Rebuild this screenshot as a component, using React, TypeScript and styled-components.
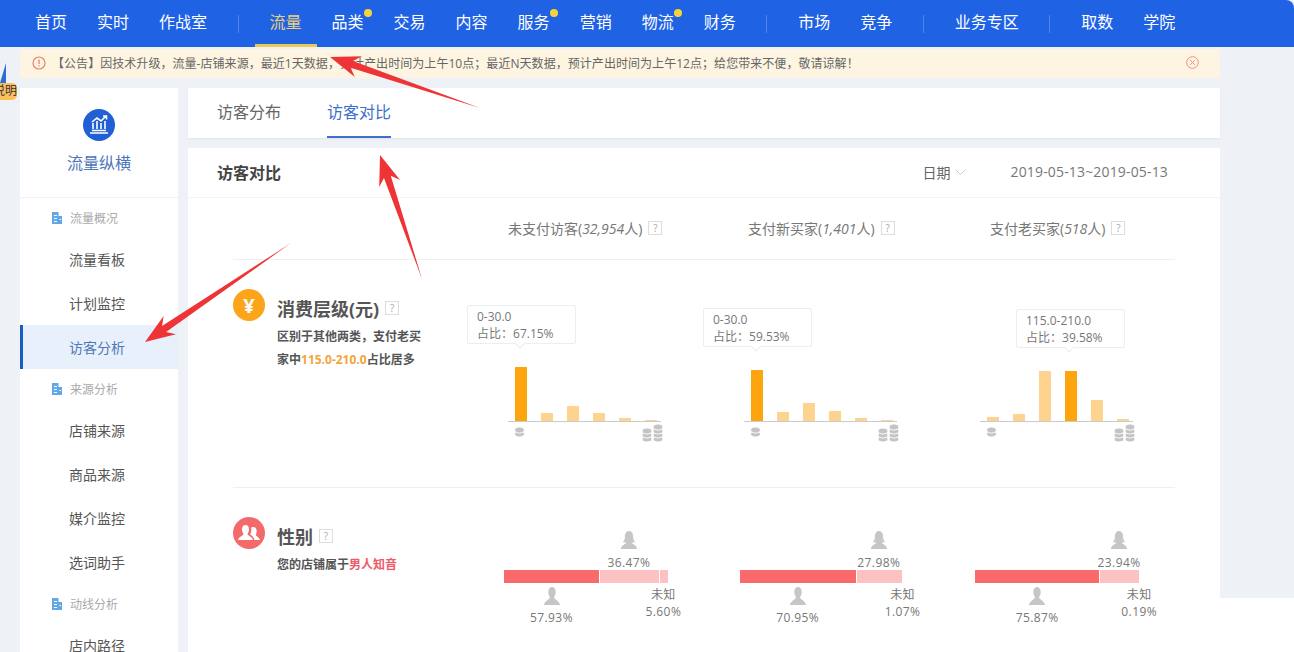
import styled, { createGlobalStyle } from 'styled-components';

const GlobalStyle = createGlobalStyle`
  html, body {
    margin: 0;
    padding: 0;
    background: #fff;
  }
  body {
    font-family: "Open Sans", "Noto Sans CJK SC", sans-serif;
    color: #666;
  }
  * {
    box-sizing: border-box;
  }
`;

type TNavEntry = { label: string; dot?: boolean; active?: boolean } | 'sep';

const navEntries: TNavEntry[] = [
  { label: '首页' },
  { label: '实时' },
  { label: '作战室' },
  'sep',
  { label: '流量', active: true },
  { label: '品类', dot: true },
  { label: '交易' },
  { label: '内容' },
  { label: '服务', dot: true },
  { label: '营销' },
  { label: '物流', dot: true },
  { label: '财务' },
  'sep',
  { label: '市场' },
  { label: '竞争' },
  'sep',
  { label: '业务专区' },
  'sep',
  { label: '取数' },
  { label: '学院' },
];

const sideGroups = [
  { title: '流量概况', items: ['流量看板', '计划监控', '访客分析'] },
  { title: '来源分析', items: ['店铺来源', '商品来源', '媒介监控', '选词助手'] },
  { title: '动线分析', items: ['店内路径'] },
];

const headerCols = [
  { label: '未支付访客', count: '32,954', width: 240 },
  { label: '支付新买家', count: '1,401', width: 242 },
  { label: '支付老买家', count: '518', width: 200 },
];

const charts = [
  { range: '0-30.0', share: '67.15%', top: 16, tipLeft: 0, active: 0, bars: [54, 8, 15, 8, 3, 1.5] },
  { range: '0-30.0', share: '59.53%', top: 19, tipLeft: 0, active: 0, bars: [51, 9, 18, 10, 3, 1.5] },
  { range: '115.0-210.0', share: '39.58%', top: 20, tipLeft: 77, active: 3, bars: [4, 7, 50, 50, 21, 2] },
];

const genders = [
  { male: 57.93, female: 36.47, unknown: 5.6 },
  { male: 70.95, female: 27.98, unknown: 1.07 },
  { male: 75.87, female: 23.94, unknown: 0.19 },
];

const Page = styled.div`
  position: relative;
  width: 1294px;
  height: 652px;
  overflow: hidden;
  background: #eef1f6;
`;
const Nav = styled.nav`
  display: flex;
  align-items: stretch;
  height: 47px;
  padding-left: 20px;
  background: #2062e4;
  border-top-right-radius: 8px;
`;
const NavItem = styled.a<{ $active?: boolean }>`
  position: relative;
  display: flex;
  align-items: center;
  padding: 0 15px 2px;
  font-size: 16px;
  color: ${(p) => (p.$active ? '#ecd27a' : '#fff')};
  border-bottom: 3px solid ${(p) => (p.$active ? '#e6c957' : 'transparent')};
`;
const NavDot = styled.i`
  position: absolute;
  top: 9px;
  right: 7px;
  width: 8px;
  height: 8px;
  border-radius: 50%;
  background: #f6d33c;
`;
const NavSep = styled.span`
  align-self: center;
  width: 1px;
  height: 18px;
  margin: 0 15.75px;
  background: #4f82ea;
`;
const Workspace = styled.div`
  padding: 2px 74px 0 20px;
`;
const Notice = styled.div`
  display: flex;
  align-items: center;
  height: 29px;
  padding: 0 21px 2px 12px;
  background: #fdf5e1;
  font-size: 12px;
  color: #666;
`;
const NoticeText = styled.span`
  flex: 1;
  margin-left: 6px;
  letter-spacing: 0.05px;
  white-space: nowrap;
`;
const Columns = styled.div`
  display: flex;
  gap: 10px;
  margin-top: 10px;
`;
const Sidebar = styled.aside`
  flex: none;
  width: 158px;
  height: 564px;
  overflow: hidden;
  background: #fff;
`;
const SideHead = styled.div`
  display: flex;
  flex-direction: column;
  align-items: center;
  height: 110px;
  padding-top: 21px;
  border-bottom: 1px solid #eff1f4;
`;
const SideLogo = styled.svg`
  width: 32px;
  height: 32px;
`;
const SideTitle = styled.div`
  margin-top: 10px;
  font-size: 16px;
  line-height: 24px;
  color: #4c76b8;
`;
const GroupTitle = styled.div`
  display: flex;
  align-items: center;
  gap: 7px;
  height: 39px;
  padding-left: 31px;
  font-size: 12px;
  color: #aaa;
`;
const SideItem = styled.a<{ $active?: boolean }>`
  display: flex;
  align-items: center;
  height: 44px;
  padding-left: ${(p) => (p.$active ? '46px' : '49px')};
  font-size: 14px;
  color: ${(p) => (p.$active ? '#4f78b8' : '#555')};
  background: ${(p) => (p.$active ? '#e8f0fb' : 'transparent')};
  border-left: ${(p) => (p.$active ? '3px solid #1a5fc0' : '0')};
`;
const Main = styled.main`
  flex: 1;
  min-width: 0;
`;
const TabCard = styled.div`
  display: flex;
  gap: 46px;
  height: 50px;
  padding-left: 29px;
  background: #fff;
  box-shadow: 0 1px 2px rgba(0, 0, 0, 0.06);
`;
const Tab = styled.a<{ $active?: boolean }>`
  display: flex;
  align-items: center;
  height: 50px;
  padding-bottom: 3px;
  font-size: 16px;
  color: ${(p) => (p.$active ? '#3c70cc' : '#666')};
  border-bottom: 2px solid ${(p) => (p.$active ? '#3c70cc' : 'transparent')};
`;
const Section = styled.section`
  height: 504px;
  margin-top: 10px;
  background: #fff;
`;
const SectionHead = styled.header`
  display: flex;
  align-items: center;
  height: 50px;
  padding: 0 52px 2px 29px;
  border-bottom: 1px solid #f2f3f5;
`;
const SectionTitle = styled.h2`
  flex: 1;
  margin: 0;
  font-size: 16px;
  font-weight: 700;
  color: #444;
`;
const DateLabel = styled.span`
  display: flex;
  align-items: center;
  gap: 4px;
  margin-right: 45px;
  font-size: 14px;
  color: #666;
`;
const DateValue = styled.span`
  font-size: 14px;
  letter-spacing: 0.16px;
  color: #777;
`;
const SectionBody = styled.div`
  padding: 0 45px;
`;
const ColHeads = styled.div`
  display: flex;
  align-items: center;
  height: 62px;
  padding: 0 0 2px 275px;
  border-bottom: 1px solid #eeeff2;
`;
const ColHead = styled.div<{ $width: number }>`
  display: flex;
  align-items: center;
  gap: 6px;
  flex: none;
  width: ${(p) => p.$width}px;
  font-size: 14px;
  color: #777;
  em {
    font-style: italic;
  }
`;
const Help = styled.span`
  display: inline-flex;
  align-items: center;
  justify-content: center;
  width: 14px;
  height: 14px;
  border: 1px solid #ddd;
  font-size: 10px;
  font-weight: 400;
  line-height: 1;
  color: #aaa;
`;
const MetricRow = styled.div<{ $height: number }>`
  display: flex;
  height: ${(p) => p.$height}px;
  padding-top: 29px;
  border-bottom: 1px solid #eeeff2;
`;
const MetricInfo = styled.div`
  display: flex;
  flex: none;
  gap: 12px;
  width: 234px;
`;
const MetricIcon = styled.div<{ $color: string }>`
  display: flex;
  flex: none;
  align-items: center;
  justify-content: center;
  width: 32px;
  height: 32px;
  border-radius: 50%;
  font-size: 20px;
  font-weight: 700;
  color: #fff;
  background: ${(p) => p.$color};
`;
const MetricText = styled.div`
  width: 146px;
`;
const MetricTitle = styled.h3`
  display: flex;
  align-items: center;
  gap: 6px;
  height: 38px;
  margin: 0;
  font-size: 18px;
  font-weight: 700;
  color: #555;
  white-space: nowrap;
`;
const MetricDesc = styled.p`
  margin: -2px 0 0;
  font-size: 12px;
  font-weight: 700;
  line-height: 23px;
  color: #555;
`;
const Accent = styled.span<{ $color: string }>`
  color: ${(p) => p.$color};
`;
const ChartCell = styled.div`
  display: flex;
  flex: none;
  flex-direction: column;
  width: 236px;
  height: 153px;
`;
const Tip = styled.div<{ $top: number; $left: number }>`
  position: relative;
  width: 109px;
  height: 39px;
  margin: ${(p) => p.$top}px 0 0 ${(p) => p.$left}px;
  padding: 2px 9px;
  border: 1px solid #eeeeee;
  border-radius: 2px;
  font-size: 12px;
  line-height: 17px;
  color: #777;
  &::after {
    content: '';
    position: absolute;
    left: 48px;
    bottom: -4px;
    width: 7px;
    height: 7px;
    background: #fff;
    border-right: 1px solid #eeeeee;
    border-bottom: 1px solid #eeeeee;
    transform: rotate(45deg);
  }
`;
const BarsArea = styled.div`
  display: flex;
  align-items: flex-end;
  gap: 14px;
  width: 153px;
  height: 56px;
  margin: auto 0 0 41px;
  padding-left: 7px;
  border-bottom: 1px solid #c8ccd0;
`;
const Bar = styled.div<{ $h: number; $active: boolean }>`
  flex: none;
  width: 12px;
  height: ${(p) => p.$h}px;
  background: ${(p) => (p.$active ? '#fca50f' : '#fdd38f')};
`;
const CoinRow = styled.div`
  display: flex;
  align-items: flex-end;
  justify-content: space-between;
  flex: none;
  width: 152px;
  height: 20px;
  margin-left: 47px;
`;
const CoinIcon = styled.svg`
  display: block;
`;
const GenderCell = styled.div`
  display: flex;
  flex: none;
  align-items: flex-start;
  width: 235.5px;
  padding: 13px 0 0 37px;
`;
const GenderBar = styled.div`
  display: flex;
  width: 164px;
`;
const GenderSeg = styled.div<{ $pct: number }>`
  display: flex;
  flex-direction: column;
  align-items: center;
  flex: none;
  width: ${(p) => p.$pct}%;
  min-width: 1px;
`;
const SegTop = styled.div`
  display: flex;
  flex-direction: column;
  align-items: center;
  justify-content: flex-end;
  height: 40px;
`;
const SegFill = styled.div<{ $color: string; $first?: boolean }>`
  align-self: stretch;
  height: 13px;
  background: ${(p) => p.$color};
  border-left: ${(p) => (p.$first ? '0' : '1px solid #fff')};
`;
const SegBottom = styled.div<{ $unknown?: boolean }>`
  display: flex;
  flex-direction: column;
  align-items: center;
  gap: ${(p) => (p.$unknown ? '3px' : '6px')};
  padding-top: ${(p) => (p.$unknown ? '5px' : '4px')};
`;
const Percent = styled.span`
  font-size: 12px;
  line-height: 14px;
  letter-spacing: 0.4px;
  white-space: nowrap;
  color: #777;
`;
const PersonIcon = styled.svg<{ $gap?: boolean }>`
  display: block;
  flex: none;
  width: 20px;
  height: 18px;
  margin-bottom: ${(p) => (p.$gap ? '7px' : '0')};
`;
const SideWidget = styled.div`
  position: absolute;
  left: 0;
  top: 63px;
  width: 17px;
`;
const WidgetTip = styled.div`
  width: 0;
  height: 0;
  border-style: solid;
  border-width: 0 0 20px 6px;
  border-color: transparent transparent #2a6fd8 transparent;
`;
const WidgetBadge = styled.div`
  display: flex;
  justify-content: flex-end;
  overflow: hidden;
  height: 17px;
  border-radius: 0 5px 5px 0;
  background: #fbbf5c;
  font-size: 12px;
  line-height: 16px;
  white-space: nowrap;
  color: #333;
`;
const WhiteCorner = styled.div`
  position: absolute;
  right: 0;
  bottom: 0;
  width: 74px;
  height: 54px;
  background: #fff;
`;
const ArrowLayer = styled.svg`
  position: absolute;
  inset: 0;
  width: 1294px;
  height: 652px;
  pointer-events: none;
`;

function arrowPoints(tx: number, ty: number, hx: number, hy: number) {
  const len = Math.hypot(hx - tx, hy - ty);
  const ux = (hx - tx) / len;
  const uy = (hy - ty) / len;
  const at = (back: number, side: number) =>
    `${hx - ux * back - uy * side},${hy - uy * back + ux * side}`;
  return [
    `${tx},${ty}`,
    at(23, 3.6),
    at(30, 11),
    `${hx},${hy}`,
    at(30, -11),
    at(23, -3.6),
  ].join(' ');
}

function Person({ female, gap }: { female?: boolean; gap?: boolean }) {
  return (
    <PersonIcon viewBox="0 0 24 22" $gap={gap}>
      <path
        fill="#c6c6c6"
        d={
          female
            ? 'M12 0C8 0 7 4 7 7c0 3-1 5-2.500 6.500L9 14.500C7.500 16.500 3 17 2 22h20c-1-5-5.500-5.500-7-7.500l4.500-1C18 12 17 10 17 7c0-3-1-7-5-7z'
            : 'M12 0C9 0 7.500 2.500 7.500 6c0 3 1 5 2 6.500C9.500 15 4 16 2 22h20c-2-6-7.500-7-7.500-9.500 1-1.500 2-3.500 2-6.500 0-3.500-1.500-6-4.500-6z'
        }
      />
    </PersonIcon>
  );
}

// each stack is drawn bottom coin first so the top coin stays whole
function Coins({ stacks, width }: { stacks: number[][]; width: number }) {
  return (
    <CoinIcon width={width} height={20} viewBox={`0 0 ${width} 20`}>
      {stacks.map(([cx, top, n]) =>
        Array.from({ length: n }).map((_, i) => (
          <ellipse
            key={`${cx}-${i}`}
            cx={cx}
            cy={top + (n - 1 - i) * 4}
            rx="5"
            ry="3"
            fill="#c4c4c4"
            stroke="#fff"
            strokeWidth="0.900"
          />
        )),
      )}
    </CoinIcon>
  );
}

function Building() {
  return (
    <svg width="12" height="12" viewBox="0 0 12 12">
      <path fill="#62a8e4" d="M1 0h6.500v4H11v8H1z" />
      <path fill="#fff" d="M3 3h3v1H3zM3 6h3v1H3zM3 9h3v1H3zM8.500 7H10v1H8.500z" />
    </svg>
  );
}

export default function App() {
  return (
    <Page>
      <GlobalStyle />
      <Nav>
        {navEntries.map((entry, i) =>
          entry === 'sep' ? (
            <NavSep key={i} />
          ) : (
            <NavItem key={i} $active={entry.active}>
              {entry.label}
              {entry.dot && <NavDot />}
            </NavItem>
          ),
        )}
      </Nav>
      <Workspace>
        <Notice>
          <svg width="14" height="14" viewBox="0 0 14 14">
            <circle cx="7" cy="7" r="6" fill="none" stroke="#e8836e" strokeWidth="1.200" />
            <path d="M7 3.500v4.500M7 9.300v1.200" stroke="#e8836e" strokeWidth="1.300" />
          </svg>
          <NoticeText>
            【公告】因技术升级，流量-店铺来源，最近1天数据，预计产出时间为上午10点；最近N天数据，预计产出时间为上午12点；给您带来不便，敬请谅解！
          </NoticeText>
          <svg width="13" height="13" viewBox="0 0 13 13">
            <circle cx="6.500" cy="6.500" r="5.800" fill="none" stroke="#ec8f88" />
            <path d="M4.200 4.200l4.600 4.600M8.800 4.200l-4.600 4.600" stroke="#ec8f88" />
          </svg>
        </Notice>
        <Columns>
          <Sidebar>
            <SideHead>
              <SideLogo viewBox="0 0 32 32">
                <circle cx="16" cy="16" r="16" fill="#2060d4" />
                <path
                  d="M7 24h18M9 21.500h14M10 20v-6M14 20v-8M18 20v-6M22 20v-8M9 13l5-4 4 3 5-5M20 7h3.500v3.500"
                  fill="none"
                  stroke="#fff"
                  strokeWidth="1.600"
                />
              </SideLogo>
              <SideTitle>流量纵横</SideTitle>
            </SideHead>
            {sideGroups.map((group) => (
              <div key={group.title}>
                <GroupTitle>
                  <Building />
                  {group.title}
                </GroupTitle>
                {group.items.map((item) => (
                  <SideItem key={item} $active={item === '访客分析'}>
                    {item}
                  </SideItem>
                ))}
              </div>
            ))}
          </Sidebar>
          <Main>
            <TabCard>
              <Tab>访客分布</Tab>
              <Tab $active>访客对比</Tab>
            </TabCard>
            <Section>
              <SectionHead>
                <SectionTitle>访客对比</SectionTitle>
                <DateLabel>
                  日期
                  <svg width="11" height="6" viewBox="0 0 11 6">
                    <path d="M0.500 0.500l5 5 5-5" fill="none" stroke="#ccc" />
                  </svg>
                </DateLabel>
                <DateValue>2019-05-13~2019-05-13</DateValue>
              </SectionHead>
              <SectionBody>
                <ColHeads>
                  {headerCols.map((col) => (
                    <ColHead key={col.label} $width={col.width}>
                      <span>
                        {col.label}(<em>{col.count}</em>人)
                      </span>
                      <Help>?</Help>
                    </ColHead>
                  ))}
                </ColHeads>
                <MetricRow $height={228}>
                  <MetricInfo>
                    <MetricIcon $color="#fca41a">¥</MetricIcon>
                    <MetricText>
                      <MetricTitle>
                        消费层级(元)
                        <Help>?</Help>
                      </MetricTitle>
                      <MetricDesc>
                        区别于其他两类，支付老买家中<Accent $color="#f3a53c">115.0-210.0</Accent>占比居多
                      </MetricDesc>
                    </MetricText>
                  </MetricInfo>
                  {charts.map((chart, c) => (
                    <ChartCell key={c}>
                      <Tip $top={chart.top} $left={chart.tipLeft}>
                        {chart.range}
                        <br />
                        占比：{chart.share}
                      </Tip>
                      <BarsArea>
                        {chart.bars.map((h, i) => (
                          <Bar key={i} $h={h} $active={i === chart.active} />
                        ))}
                      </BarsArea>
                      <CoinRow>
                        <Coins width={11} stacks={[[5.5, 8, 2]]} />
                        <Coins width={24} stacks={[[5, 9, 3], [16, 5, 4]]} />
                      </CoinRow>
                    </ChartCell>
                  ))}
                </MetricRow>
                <MetricRow $height={170}>
                  <MetricInfo>
                    <MetricIcon $color="#f46a6a">
                      <svg width="22" height="16" viewBox="0 0 22 16">
                        <path
                          fill="#fff"
                          d="M7.500 0C5 0 4 2 4 4.500c0 2 1 3.500 1.500 4.500C5 11 1 11.500 0 15h15c-1-3.500-5-4-5.500-6 .5-1 1.500-2.500 1.500-4.500C11 2 10 0 7.500 0zM15 2c-.8 0-1.500.3-2 .8.300.9.400 1.800.300 2.700 0 1.500-.5 2.800-1.200 3.800.300.5 3.200 1.500 4.400 5.700H22c-.8-3-4-3.500-4.300-5.200.5-1 1-2 1-3.300C18.700 4 17.500 2 15 2z"
                        />
                      </svg>
                    </MetricIcon>
                    <MetricText>
                      <MetricTitle>
                        性别
                        <Help>?</Help>
                      </MetricTitle>
                      <MetricDesc>
                        您的店铺属于<Accent $color="#ee5a6a">男人知音</Accent>
                      </MetricDesc>
                    </MetricText>
                  </MetricInfo>
                  {genders.map((g, i) => (
                    <GenderCell key={i}>
                      <GenderBar>
                        <GenderSeg $pct={g.male}>
                          <SegTop />
                          <SegFill $color="#fa6a6a" $first />
                          <SegBottom>
                            <Person />
                            <Percent>{g.male.toFixed(2)}%</Percent>
                          </SegBottom>
                        </GenderSeg>
                        <GenderSeg $pct={g.female}>
                          <SegTop>
                            <Person female gap />
                            <Percent>{g.female.toFixed(2)}%</Percent>
                          </SegTop>
                          <SegFill $color="#fcc2c2" />
                          <SegBottom />
                        </GenderSeg>
                        <GenderSeg $pct={g.unknown}>
                          <SegTop />
                          <SegFill $color="#fcc2c2" />
                          <SegBottom $unknown>
                            <Percent>未知</Percent>
                            <Percent>{g.unknown.toFixed(2)}%</Percent>
                          </SegBottom>
                        </GenderSeg>
                      </GenderBar>
                    </GenderCell>
                  ))}
                </MetricRow>
              </SectionBody>
            </Section>
          </Main>
        </Columns>
      </Workspace>
      <SideWidget>
        <WidgetTip />
        <WidgetBadge>说明</WidgetBadge>
      </SideWidget>
      <WhiteCorner />
      <ArrowLayer viewBox="0 0 1294 652">
        <polygon fill="#ee3436" points={arrowPoints(480, 108, 330, 57)} />
        <polygon fill="#ee3436" points={arrowPoints(422, 279, 380, 155)} />
        <polygon fill="#ee3436" points={arrowPoints(291, 243, 145, 342)} />
      </ArrowLayer>
    </Page>
  );
}
